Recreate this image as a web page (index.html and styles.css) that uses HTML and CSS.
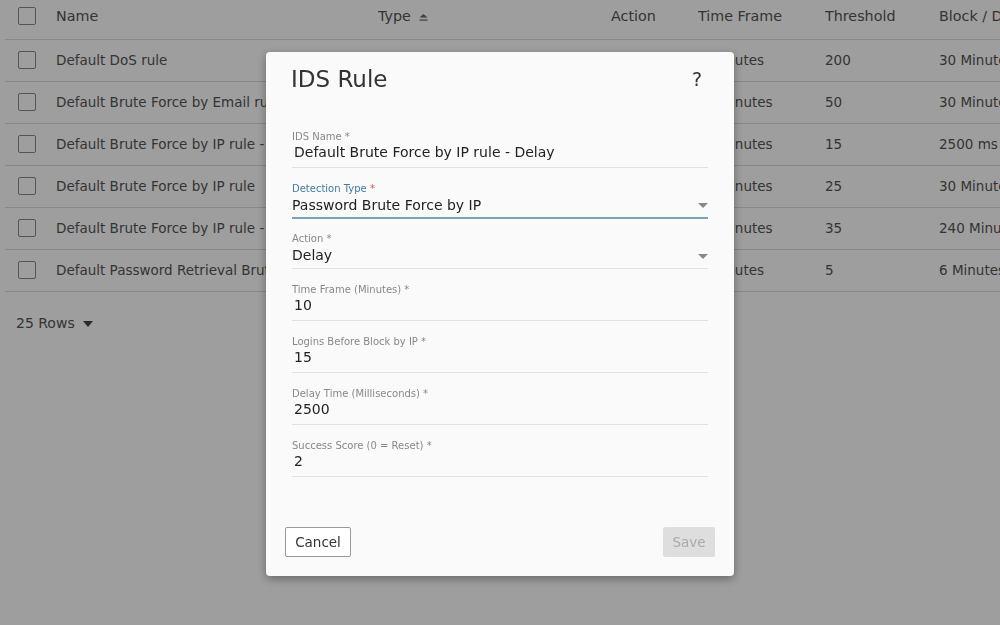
FILE: index.html
```html
<!DOCTYPE html>
<html>
	<head>
		<title>IDS Rules</title>
		<link rel="stylesheet" href="styles.css">
	</head>
	<body>
		<div class="page">
			<div class="row head">
				<div class="cell"><span class="check"></span></div>
				<div class="cell">Name</div>
				<div class="cell">Type
					<svg class="sort" width="11" height="9" viewBox="0 0 11 9"><polygon points="1.5,4.5 5.5,1 9.5,4.5" fill="#666"/><rect x="1.5" y="6.5" width="8" height="1.2" fill="#666"/></svg>
				</div>
				<div class="cell">Action</div>
				<div class="cell">Time Frame</div>
				<div class="cell">Threshold</div>
				<div class="cell">Block / Delay</div>
			</div>
			<div class="row">
				<div class="cell"><span class="check"></span></div>
				<div class="cell">Default DoS rule</div>
				<div class="cell">DoS</div>
				<div class="cell">Block</div>
				<div class="cell">1 Minutes</div>
				<div class="cell">200</div>
				<div class="cell">30 Minutes</div>
			</div>
			<div class="row">
				<div class="cell"><span class="check"></span></div>
				<div class="cell">Default Brute Force by Email rule</div>
				<div class="cell">Password Brute Force by Email</div>
				<div class="cell">Block</div>
				<div class="cell">10 Minutes</div>
				<div class="cell">50</div>
				<div class="cell">30 Minutes</div>
			</div>
			<div class="row">
				<div class="cell"><span class="check"></span></div>
				<div class="cell">Default Brute Force by IP rule - Delay</div>
				<div class="cell">Password Brute Force by IP</div>
				<div class="cell">Delay</div>
				<div class="cell">10 Minutes</div>
				<div class="cell">15</div>
				<div class="cell">2500 ms</div>
			</div>
			<div class="row">
				<div class="cell"><span class="check"></span></div>
				<div class="cell">Default Brute Force by IP rule</div>
				<div class="cell">Password Brute Force by IP</div>
				<div class="cell">Block</div>
				<div class="cell">10 Minutes</div>
				<div class="cell">25</div>
				<div class="cell">30 Minutes</div>
			</div>
			<div class="row">
				<div class="cell"><span class="check"></span></div>
				<div class="cell">Default Brute Force by IP rule - Long</div>
				<div class="cell">Password Brute Force by IP</div>
				<div class="cell">Block</div>
				<div class="cell">60 Minutes</div>
				<div class="cell">35</div>
				<div class="cell">240 Minutes</div>
			</div>
			<div class="row">
				<div class="cell"><span class="check"></span></div>
				<div class="cell">Default Password Retrieval Brute Force rule</div>
				<div class="cell">Password Retrieval</div>
				<div class="cell">Block</div>
				<div class="cell">5 Minutes</div>
				<div class="cell">5</div>
				<div class="cell">6 Minutes</div>
			</div>
			<div class="rows-select">25 Rows <span class="caret"></span></div>
		</div>

		<div class="overlay">
			<div class="modal">
				<div class="modal-head">
					<h2>IDS Rule</h2>
					<span class="help">?</span>
				</div>
				<div class="modal-body">
					<div class="field">
						<div class="label">IDS Name *</div>
						<div class="value input">Default Brute Force by IP rule - Delay</div>
					</div>
					<div class="field select focused">
						<div class="label">Detection Type <span class="req">*</span></div>
						<div class="value">Password Brute Force by IP</div>
						<span class="arrow"></span>
					</div>
					<div class="field select">
						<div class="label">Action *</div>
						<div class="value">Delay</div>
						<span class="arrow"></span>
					</div>
					<div class="field">
						<div class="label">Time Frame (Minutes) *</div>
						<div class="value input">10</div>
					</div>
					<div class="field">
						<div class="label">Logins Before Block by IP *</div>
						<div class="value input">15</div>
					</div>
					<div class="field">
						<div class="label">Delay Time (Milliseconds) *</div>
						<div class="value input">2500</div>
					</div>
					<div class="field">
						<div class="label">Success Score (0 = Reset) *</div>
						<div class="value input">2</div>
					</div>
				</div>
				<div class="modal-foot">
					<button class="btn cancel">Cancel</button>
					<button class="btn save">Save</button>
				</div>
			</div>
		</div>
	</body>
</html>
```

FILE: styles.css
```css
body{
	margin:0;
	overflow:hidden;
	background-color:white;
	font-family:"DejaVu Sans", Verdana, sans-serif;
	color:#555;
}
.page{
	padding-left:5px;
	width:1300px;
}
.row{
	display:grid;
	grid-template-columns:51px 322px 233px 87px 127px 114px 200px;
	height:40px;
	padding-bottom:1px;
	align-items:center;
	border-bottom:1px solid #dcdcdc;
	font-size:13.5px;
	white-space:nowrap;
}
.row.head{
	height:32px;
	padding-bottom:7px;
	font-size:14.3px;
}
.cell{
	overflow:hidden;
}
.check{
	display:block;
	width:16px;
	height:16px;
	margin-left:13px;
	border:1.5px solid #8a8a8a;
	border-radius:2px;
}
.sort{
	margin-left:3px;
	vertical-align:middle;
}
.rows-select{
	padding:23px 0 0 11px;
	font-size:14px;
}
.caret{
	display:inline-block;
	margin-left:4px;
	border-left:5px solid transparent;
	border-right:5px solid transparent;
	border-top:6px solid #444;
	vertical-align:middle;
}

.overlay{
	position:fixed;
	top:0;
	left:0;
	right:0;
	bottom:0;
	background-color:rgba(0,0,0,0.38);
	display:flex;
	justify-content:center;
	align-items:flex-start;
	padding-top:52px;
}
.modal{
	width:468px;
	height:524px;
	background-color:#fafafa;
	border-radius:4px;
	box-shadow:0 3px 10px rgba(0,0,0,0.35);
	display:flex;
	flex-direction:column;
}
.modal-head{
	display:flex;
	justify-content:space-between;
	align-items:center;
	padding:13px 32px 0 25px;
}
.modal-head h2{
	margin:0;
	font-size:23px;
	line-height:28px;
	font-weight:normal;
	color:#333;
}
.help{
	font-size:19px;
	color:#333;
}
.modal-body{
	padding:37px 26px 0 26px;
}
.field{
	position:relative;
	border-bottom:1px solid #e2e2e2;
	margin-bottom:14px;
	padding-bottom:6px;
}
.field.select{
	padding-bottom:5px;
}
.field.focused{
	border-bottom:2px solid #7aa3b9;
	margin-bottom:13px;
	padding-bottom:4px;
}
.label{
	font-size:10px;
	line-height:13px;
	color:#888;
}
.focused .label{
	color:#3f7ba0;
}
.req{
	color:#d9534f;
}
.value{
	font-size:14px;
	line-height:18px;
	color:#222;
}
.value.input{
	padding-left:2px;
}
.select .value{
	position:relative;
	top:1px;
}
.arrow{
	position:absolute;
	right:0;
	bottom:9px;
	border-left:5px solid transparent;
	border-right:5px solid transparent;
	border-top:5px solid #888;
}
.modal-foot{
	margin-top:auto;
	display:flex;
	justify-content:space-between;
	padding:0 19px 19px 19px;
}
.btn{
	height:30px;
	font-family:"DejaVu Sans", Verdana, sans-serif;
	font-size:13.5px;
	border-radius:2px;
}
.cancel{
	width:66px;
	background-color:white;
	border:1px solid #999;
	color:#333;
}
.save{
	width:52px;
	background-color:#dedede;
	border:none;
	color:#aaa;
}
```
